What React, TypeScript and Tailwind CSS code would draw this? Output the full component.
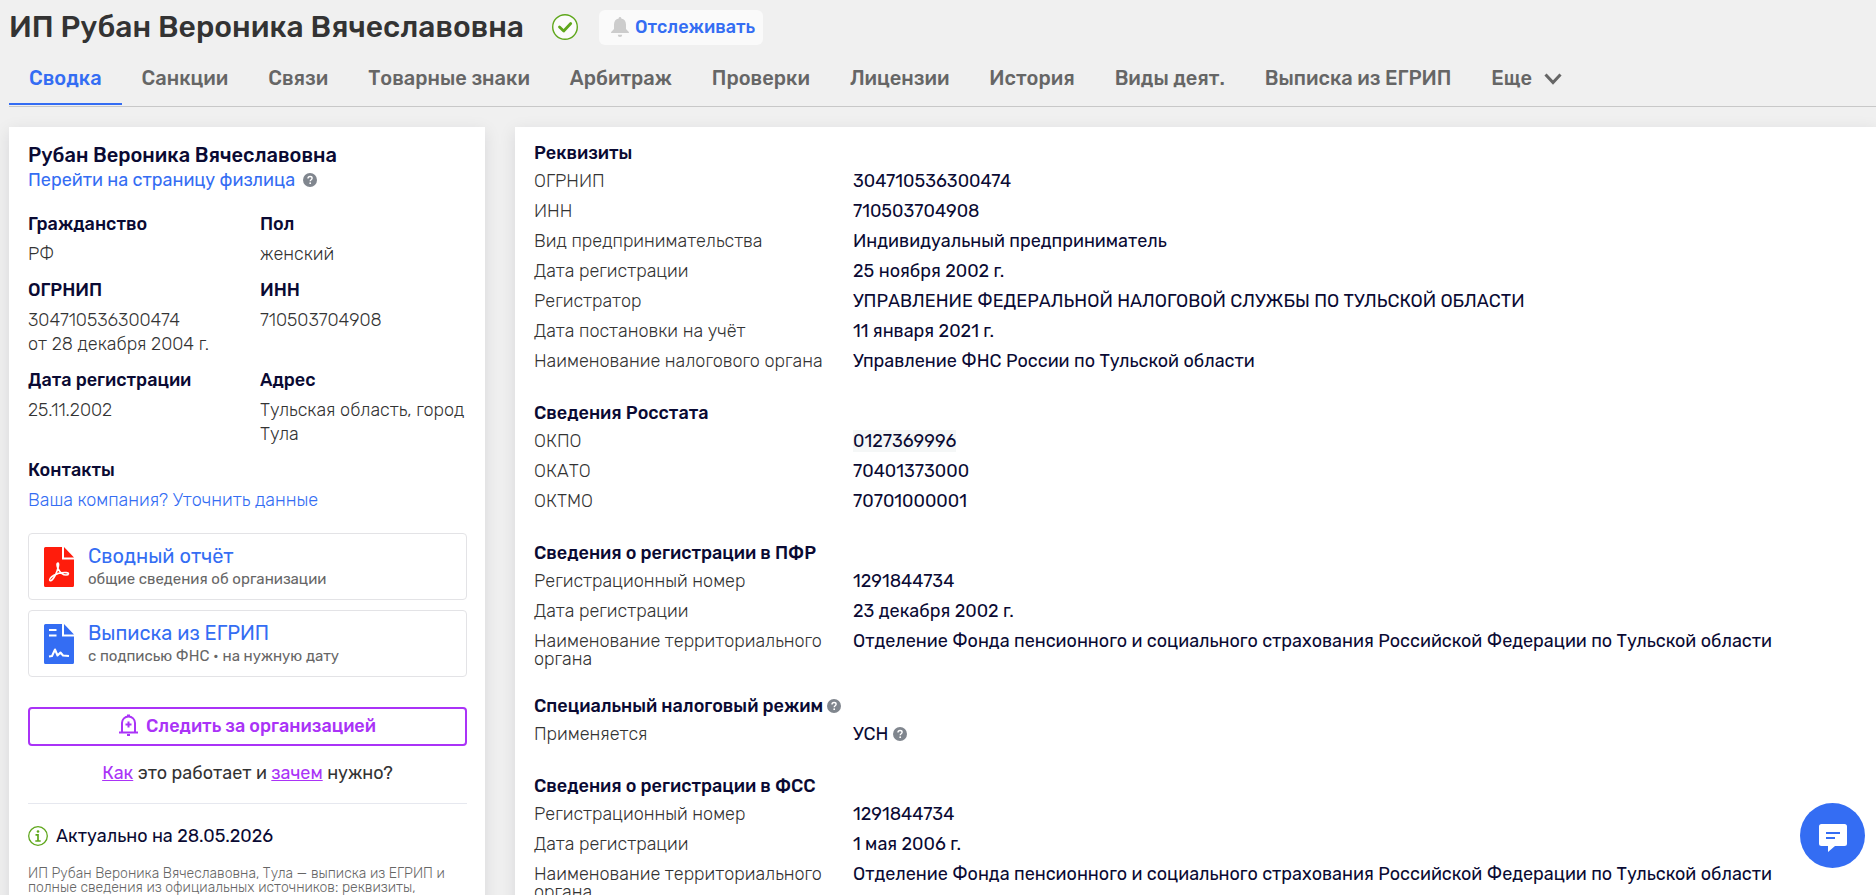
import type { ReactNode } from 'react'

type Row = { label: string; value: ReactNode }
type Section = { title: ReactNode; rows: Row[] }

const tabs = [
  'Сводка',
  'Санкции',
  'Связи',
  'Товарные знаки',
  'Арбитраж',
  'Проверки',
  'Лицензии',
  'История',
  'Виды деят.',
  'Выписка из ЕГРИП',
]

const person = [
  { label: 'Гражданство', lines: ['РФ'] },
  { label: 'Пол', lines: ['женский'] },
  { label: 'ОГРНИП', lines: ['304710536300474', 'от 28 декабря 2004 г.'] },
  { label: 'ИНН', lines: ['710503704908'] },
  { label: 'Дата регистрации', lines: ['25.11.2002'] },
  { label: 'Адрес', lines: ['Тульская область, город', 'Тула'] },
]

const sections: Section[] = [
  {
    title: 'Реквизиты',
    rows: [
      { label: 'ОГРНИП', value: '304710536300474' },
      { label: 'ИНН', value: '710503704908' },
      { label: 'Вид предпринимательства', value: 'Индивидуальный предприниматель' },
      { label: 'Дата регистрации', value: '25 ноября 2002 г.' },
      { label: 'Регистратор', value: 'УПРАВЛЕНИЕ ФЕДЕРАЛЬНОЙ НАЛОГОВОЙ СЛУЖБЫ ПО ТУЛЬСКОЙ ОБЛАСТИ' },
      { label: 'Дата постановки на учёт', value: '11 января 2021 г.' },
      { label: 'Наименование налогового органа', value: 'Управление ФНС России по Тульской области' },
    ],
  },
  {
    title: 'Сведения Росстата',
    rows: [
      { label: 'ОКПО', value: <span className="bg-[#f5f7f7]">0127369996</span> },
      { label: 'ОКАТО', value: '70401373000' },
      { label: 'ОКТМО', value: '70701000001' },
    ],
  },
  {
    title: 'Сведения о регистрации в ПФР',
    rows: [
      { label: 'Регистрационный номер', value: '1291844734' },
      { label: 'Дата регистрации', value: '23 декабря 2002 г.' },
      {
        label: 'Наименование территориального органа',
        value: 'Отделение Фонда пенсионного и социального страхования Российской Федерации по Тульской области',
      },
    ],
  },
  {
    title: (
      <>
        Специальный налоговый режим <Hint />
      </>
    ),
    rows: [
      {
        label: 'Применяется',
        value: (
          <>
            УСН <Hint />
          </>
        ),
      },
    ],
  },
  {
    title: 'Сведения о регистрации в ФСС',
    rows: [
      { label: 'Регистрационный номер', value: '1291844734' },
      { label: 'Дата регистрации', value: '1 мая 2006 г.' },
      {
        label: 'Наименование территориального органа',
        value: 'Отделение Фонда пенсионного и социального страхования Российской Федерации по Тульской области',
      },
    ],
  },
]

function Hint() {
  return (
    <svg viewBox="0 0 14 14" className="inline-block size-3.5 align-[-1px]" aria-hidden="true">
      <circle cx="7" cy="7" r="7" fill="#80868e" />
      <path d="M5 5.6c0-1.3.9-2.1 2.1-2.1 1.200 0 2 .7 2 1.700 0 1.500-1.900 1.500-1.900 3" fill="none" stroke="#fff" strokeWidth="1.400" />
      <circle cx="7.200" cy="10.200" r=".9" fill="#fff" />
    </svg>
  )
}

function PdfIcon() {
  return (
    <svg viewBox="0 0 30 40" className="h-10 w-[30px] shrink-0" aria-hidden="true">
      <path d="M1.500 0H18v12.500h12v26a1.500 1.500 0 0 1-1.500 1.500h-27A1.500 1.500 0 0 1 0 38.500v-37A1.500 1.500 0 0 1 1.500 0Z" fill="#ff1c0c" />
      <path d="M20 0l10 10.500H20Z" fill="#ff1c0c" />
      <path
        d="M14 16c-1.500 0-1.200 3 .2 5.800 1.600 3.200 4.800 6.200 7.800 6.200 3 0 3.400-2.300.3-2.400-3.800-.2-9.300.8-12.800 2.900-3 1.800-4.600 4.200-3.500 5 1.300.9 3.700-2 5.600-5.900 2-4.200 4-11.600 2.400-11.600Z"
        fill="none"
        stroke="#fff"
        strokeWidth="1.600"
      />
    </svg>
  )
}

function StatementIcon() {
  return (
    <svg viewBox="0 0 30 40" className="h-10 w-[30px] shrink-0" aria-hidden="true">
      <path d="M1.500 0H18v12.500h12v26a1.500 1.500 0 0 1-1.500 1.500h-27A1.500 1.500 0 0 1 0 38.500v-37A1.500 1.500 0 0 1 1.500 0Z" fill="#346df3" />
      <path d="M20 0l10 10.500H20Z" fill="#346df3" />
      <path d="M5 6h7.500M5 11.500h7.500" stroke="#fff" strokeWidth="2" />
      <path d="M5 32.500l3-.5 3-6.500 2.500 6 3-3 2.500 3 6 .5" fill="none" stroke="#fff" strokeWidth="2" strokeLinejoin="round" />
    </svg>
  )
}

function ReportLink({ icon, title, note }: { icon: ReactNode; title: string; note: string }) {
  return (
    <a href="#" className="flex h-[67px] items-center gap-3.5 rounded border border-[#e3e3e6] px-[15px]">
      {icon}
      <span className="flex flex-col">
        <span className="text-xl leading-6 text-[#346df3]">{title}</span>
        <span className="text-[15px] leading-[22px] text-[#666]">{note}</span>
      </span>
    </a>
  )
}

export default function App() {
  return (
    <div className="h-screen overflow-hidden bg-[#f0f0f0] pl-[9px] font-['Rubik','Roboto',sans-serif] text-[18px] text-[#0a0a33]">
      <header>
        <div className="flex h-[57px] items-center pb-[3px]">
          <h1 className="text-[30px] font-medium text-[#333]">ИП Рубан Вероника Вячеславовна</h1>
          <svg viewBox="0 0 26 26" className="ml-7 size-[26px]" aria-label="Действующий">
            <circle cx="13" cy="13" r="12.300" fill="#fff" fillOpacity=".7" stroke="#5fa71c" strokeWidth="1.400" />
            <path d="M7.500 13l4.200 4 7-7.500" fill="none" stroke="#5fa71c" strokeWidth="2.800" strokeLinecap="round" strokeLinejoin="round" />
          </svg>
          <button className="ml-[21px] flex h-[35px] items-center gap-1.5 rounded-md bg-[#fafafa] px-2 pl-3 font-medium text-[#346df3]">
            <svg viewBox="0 0 18 20" className="h-5 w-[18px]" aria-hidden="true">
              <path d="M9 0c.8 0 1.300.6 1.300 1.400C13.500 2 15 4.400 15 7.500V12l2.600 2.700c.8.8.3 1.300-.6 1.300H1c-.9 0-1.400-.5-.6-1.300L3 12V7.500c0-3.100 1.500-5.500 4.700-6.100C7.700.6 8.200 0 9 0Z" fill="#ccc" />
              <path d="M6.800 17.800h4.400a2.200 2.200 0 0 1-4.400 0Z" fill="#ccc" />
            </svg>
            Отслеживать
          </button>
        </div>
        <nav className="flex border-b border-[#c8c8c8] text-xl leading-6 font-medium text-[#666]">
          {tabs.map((tab, i) => (
            <a
              key={tab}
              href="#"
              className={
                i === 0
                  ? 'mb-px h-12 border-b-2 border-[#346df3] px-5 pt-[9px] whitespace-nowrap text-[#346df3]'
                  : 'h-12 px-5 pt-[9px] whitespace-nowrap'
              }
            >
              {tab}
            </a>
          ))}
          <button className="flex h-12 items-start gap-3 px-5 pt-[9px]">
            Еще
            <svg viewBox="0 0 18 12" className="mt-[7px] h-3 w-[18px]" aria-hidden="true">
              <path d="M1.500 1.500L9 9.500l7.500-8" fill="none" stroke="#666" strokeWidth="3" />
            </svg>
          </button>
        </nav>
      </header>

      <div className="mt-5 flex items-stretch gap-[30px]">
        <aside className="w-[476px] shrink-0 bg-white pt-4 pr-[18px] pb-6 pl-[19px] shadow-[0_4px_16px_rgba(0,20,40,0.1)]">
          <h2 className="text-xl leading-6 font-medium">Рубан Вероника Вячеславовна</h2>
          <p className="mt-px leading-6">
            <a href="#" className="mr-2 text-[#346df3]">
              Перейти на страницу физлица
            </a>
            <Hint />
          </p>

          <dl className="mt-5 grid grid-cols-[232px_1fr] gap-y-3 leading-6">
            {person.map((item) => (
              <div key={item.label}>
                <dt className="font-medium">{item.label}</dt>
                <dd className="mt-1.5 font-light text-[#333]">
                  {item.lines.map((line) => (
                    <div key={line} className="whitespace-nowrap">{line}</div>
                  ))}
                </dd>
              </div>
            ))}
          </dl>
          <h3 className="mt-3 leading-6 font-medium">Контакты</h3>
          <a href="#" className="mt-1.5 block leading-6 font-light text-[#346df3]">
            Ваша компания? Уточнить данные
          </a>

          <div className="mt-[21px] flex flex-col gap-2.5">
            <ReportLink icon={<PdfIcon />} title="Сводный отчёт" note="общие сведения об организации" />
            <ReportLink icon={<StatementIcon />} title="Выписка из ЕГРИП" note="с подписью ФНС • на нужную дату" />
          </div>

          <button className="mt-[30px] flex h-[39px] w-full items-center justify-center gap-2 rounded border-2 border-[#aa33f7] font-medium text-[#aa33f7]">
            <svg viewBox="0 0 19 22" className="mb-1 h-[22px] w-[19px]" fill="none" stroke="#aa33f7" strokeWidth="2" aria-hidden="true">
              <path d="M3 18.500V9a6.500 6.500 0 0 1 13 0v9.500M0 18.500h19M9.500 7.500v6M6.500 10.500h6" />
              <path d="M8 1.500h3M8 21h3" />
            </svg>
            Следить за организацией
          </button>
          <p className="mt-[15px] text-center leading-6 text-[#333]">
            <a href="#" className="text-[#aa33f7] underline">Как</a> это работает и{' '}
            <a href="#" className="text-[#aa33f7] underline">зачем</a> нужно?
          </p>
          <hr className="mt-[18px] border-[#e6e8ef]" />
          <p className="mt-5 flex items-center gap-2 leading-6">
            <svg viewBox="0 0 20 20" className="size-5" fill="none" stroke="#5fa71c" aria-hidden="true">
              <circle cx="10" cy="10" r="9.300" strokeWidth="1.300" />
              <circle cx="10" cy="5.500" r="1.300" fill="#5fa71c" stroke="none" />
              <path d="M7.500 8.800H10V15M7.300 15h5.400" strokeWidth="1.700" />
            </svg>
            Актуально на 28.05.2026
          </p>
          <p className="mt-[19px] text-sm leading-[14px] font-light text-[#666]">
            ИП Рубан Вероника Вячеславовна, Тула — выписка из ЕГРИП и
            <br />
            полные сведения из официальных источников: реквизиты,
          </p>
        </aside>

        <main className="min-w-0 flex-1 bg-white px-[19px] pt-3.5 shadow-[0_4px_16px_rgba(0,20,40,0.1)]">
          {sections.map((section, i) => (
            <section key={i} className="mb-6">
              <h3 className="leading-6 font-medium">{section.title}</h3>
              <dl className="mt-0.5">
                {section.rows.map((row) => (
                  <div key={row.label} className="grid grid-cols-[289px_1fr] gap-x-[30px] pb-0.5">
                    <dt className="pt-[5px] leading-[18px] font-light text-[#333]">{row.label}</dt>
                    <dd className="leading-7">{row.value}</dd>
                  </div>
                ))}
              </dl>
            </section>
          ))}
        </main>
      </div>

      <button
        aria-label="Открыть чат"
        className="fixed right-[11px] bottom-[27px] flex size-[65px] items-center justify-center rounded-full bg-[#346df3]"
      >
        <svg viewBox="0 0 28 28" className="mt-1 size-7" aria-hidden="true">
          <path d="M2.500 0h23A2.500 2.500 0 0 1 28 2.500v17a2.500 2.500 0 0 1-2.500 2.500H16l-7 6v-6H2.500A2.500 2.500 0 0 1 0 19.500v-17A2.500 2.500 0 0 1 2.500 0Z" fill="#fff" />
          <path d="M7 9h14M7 14h9" stroke="#346df3" strokeWidth="2" />
        </svg>
      </button>
    </div>
  )
}
